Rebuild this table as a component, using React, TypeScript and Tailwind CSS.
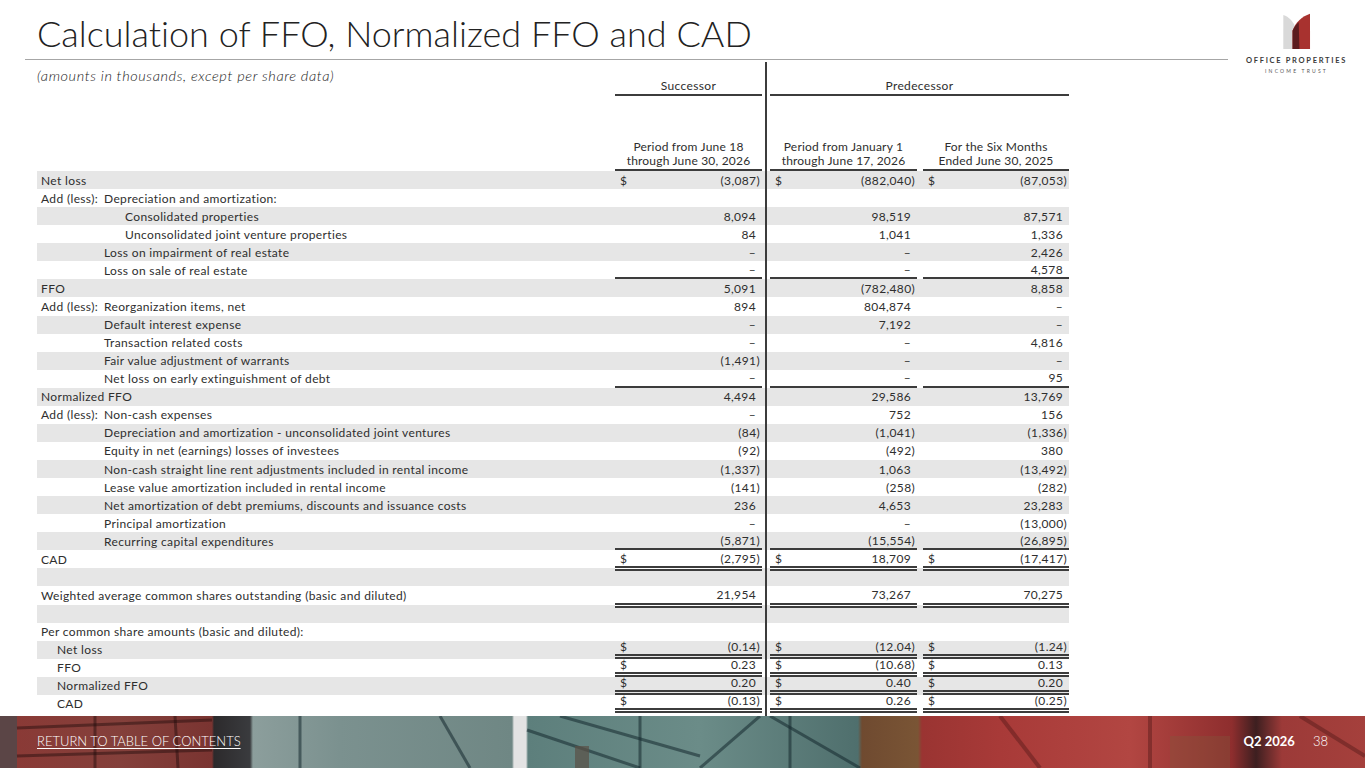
import React from "react";

type Line = "single" | "double" | "doubleIn";

type Row = {
  label: string;
  prefix?: string;
  indent: "l0" | "l1" | "l2" | "ps";
  v?: [string, string, string];
  dollar?: boolean;
  line?: Line;
};

const D = "–";

const rows: Row[] = [
  { label: "Net loss", indent: "l0", v: ["(3,087)", "(882,040)", "(87,053)"], dollar: true },
  { label: "Depreciation and amortization:", prefix: "Add (less):", indent: "l0" },
  { label: "Consolidated properties", indent: "l2", v: ["8,094", "98,519", "87,571"] },
  { label: "Unconsolidated joint venture properties", indent: "l2", v: ["84", "1,041", "1,336"] },
  { label: "Loss on impairment of real estate", indent: "l1", v: [D, D, "2,426"] },
  { label: "Loss on sale of real estate", indent: "l1", v: [D, D, "4,578"], line: "single" },
  { label: "FFO", indent: "l0", v: ["5,091", "(782,480)", "8,858"] },
  { label: "Reorganization items, net", prefix: "Add (less):", indent: "l0", v: ["894", "804,874", D] },
  { label: "Default interest expense", indent: "l1", v: [D, "7,192", D] },
  { label: "Transaction related costs", indent: "l1", v: [D, D, "4,816"] },
  { label: "Fair value adjustment of warrants", indent: "l1", v: ["(1,491)", D, D] },
  { label: "Net loss on early extinguishment of debt", indent: "l1", v: [D, D, "95"], line: "single" },
  { label: "Normalized FFO", indent: "l0", v: ["4,494", "29,586", "13,769"] },
  { label: "Non-cash expenses", prefix: "Add (less):", indent: "l0", v: [D, "752", "156"] },
  { label: "Depreciation and amortization - unconsolidated joint ventures", indent: "l1", v: ["(84)", "(1,041)", "(1,336)"] },
  { label: "Equity in net (earnings) losses of investees", indent: "l1", v: ["(92)", "(492)", "380"] },
  { label: "Non-cash straight line rent adjustments included in rental income", indent: "l1", v: ["(1,337)", "1,063", "(13,492)"] },
  { label: "Lease value amortization included in rental income", indent: "l1", v: ["(141)", "(258)", "(282)"] },
  { label: "Net amortization of debt premiums, discounts and issuance costs", indent: "l1", v: ["236", "4,653", "23,283"] },
  { label: "Principal amortization", indent: "l1", v: [D, D, "(13,000)"] },
  { label: "Recurring capital expenditures", indent: "l1", v: ["(5,871)", "(15,554)", "(26,895)"], line: "single" },
  { label: "CAD", indent: "l0", v: ["(2,795)", "18,709", "(17,417)"], dollar: true, line: "double" },
  { label: "", indent: "l0" },
  { label: "Weighted average common shares outstanding (basic and diluted)", indent: "l0", v: ["21,954", "73,267", "70,275"], line: "double" },
  { label: "", indent: "l0" },
  { label: "Per common share amounts (basic and diluted):", indent: "l0" },
  { label: "Net loss", indent: "ps", v: ["(0.14)", "(12.04)", "(1.24)"], dollar: true, line: "doubleIn" },
  { label: "FFO", indent: "ps", v: ["0.23", "(10.68)", "0.13"], dollar: true, line: "doubleIn" },
  { label: "Normalized FFO", indent: "ps", v: ["0.20", "0.40", "0.20"], dollar: true, line: "doubleIn" },
  { label: "CAD", indent: "ps", v: ["(0.13)", "0.26", "(0.25)"], dollar: true, line: "doubleIn" },
];

const indentCls: Record<string, string> = {
  l0: "pl-[4px]",
  l1: "pl-[67px]",
  l2: "pl-[88px]",
  ps: "pl-[20px]",
};

const lineCls: Record<string, string> = {
  none: "",
  single: "border-b-2 border-[#3c3c3c]",
  double: "relative border-b-2 border-[#3c3c3c] shadow-[0_1px_0_0_#ffffff,0_3px_0_0_#3c3c3c]",
  doubleIn: "border-b-[5px] border-double border-[#3c3c3c] pb-[1px]",
};

function Val({ v, dollar, line, w }: { v?: string; dollar?: boolean; line?: Line; w: string }) {
  const paren = v ? v.endsWith(")") : false;
  return (
    <div className={`${w} flex items-center justify-between pl-[5px] ${paren ? "pr-[2px]" : "pr-[6px]"} ${lineCls[line ?? "none"]}`}>
      <span>{dollar ? "$" : ""}</span>
      <span>{v ?? ""}</span>
    </div>
  );
}

function Sep({ top = false }: { top?: boolean }) {
  return (
    <div className="w-[8px] flex justify-center">
      <div className={`w-[2px] bg-[#3c3c3c] ${top ? "mt-[2px]" : ""}`} />
    </div>
  );
}

function Logo() {
  return (
    <div className="flex flex-col items-center pt-[13px]">
      <svg width="28" height="36" viewBox="0 0 80 105">
        <path d="M0,6 C16,10 30,26 37,46 L37,105 L0,105 Z" fill="#d9d9d9" />
        <path d="M27,105 L27,52 C36,26 55,10 78,2 L78,105 Z" fill="#a8322f" />
        <path d="M27,105 L27,52 C31,42 37,34 45,27 L47,105 Z" fill="#5b1c1f" />
      </svg>
      <div className="mt-[7px] text-[7.5px] leading-[10px] font-bold tracking-[1.7px] text-[#3a3a3a]">
        OFFICE PROPERTIES
      </div>
      <div className="mt-[1px] text-[5px] leading-[8px] tracking-[2.2px] text-[#555555]">
        INCOME TRUST
      </div>
    </div>
  );
}

function Footer() {
  return (
    <div className="relative h-[52px] w-full overflow-hidden bg-[linear-gradient(90deg,#5b4546_0px,#5b4546_17px,#8a3a36_17px,#84403b_120px,#7a3431_212px,#2c2a2c_214px,#3a3b3e_250px,#8c9e9c_253px,#7b918f_340px,#6f8784_512px,#e3e3e3_514px,#e3e3e3_526px,#5d7f7c_528px,#6b8c88_700px,#4f6f6d_858px,#6f4a30_862px,#7a5535_918px,#9a3432_922px,#a83a38_1000px,#b24642_1130px,#8e2e2e_1232px,#3d1f20_1256px,#9c3a38_1282px,#a5403c_1365px)]">
      <svg className="absolute inset-0" width="1365" height="52" viewBox="0 0 1365 52">
        <g stroke="rgba(30,10,10,0.45)" strokeWidth="3" fill="none">
          <line x1="95" y1="0" x2="95" y2="52" />
          <line x1="175" y1="0" x2="178" y2="52" />
          <line x1="17" y1="12" x2="212" y2="4" />
          <line x1="17" y1="40" x2="212" y2="34" />
        </g>
        <g stroke="rgba(20,40,45,0.55)" strokeWidth="3" fill="none">
          <line x1="300" y1="0" x2="300" y2="52" />
          <line x1="440" y1="0" x2="470" y2="52" />
          <line x1="527" y1="14" x2="640" y2="52" />
          <line x1="560" y1="0" x2="700" y2="40" />
          <line x1="760" y1="0" x2="700" y2="52" />
          <line x1="770" y1="0" x2="860" y2="52" />
          <line x1="640" y1="0" x2="640" y2="52" />
          <line x1="790" y1="0" x2="790" y2="52" />
        </g>
        <g stroke="rgba(60,15,15,0.35)" strokeWidth="4" fill="none">
          <line x1="1000" y1="0" x2="1040" y2="52" />
          <line x1="1150" y1="0" x2="1150" y2="52" />
          <line x1="1300" y1="0" x2="1365" y2="40" />
        </g>
        <rect x="575" y="30" width="14" height="22" fill="rgba(90,80,70,0.7)" />
        <rect x="1170" y="20" width="60" height="32" fill="rgba(130,90,60,0.35)" />
      </svg>
      <div className="relative flex h-full items-center justify-between pl-[37px] pr-[37px] text-white">
        <span className="text-[13px] font-light underline underline-offset-2">RETURN TO TABLE OF CONTENTS</span>
        <div className="flex items-center gap-[18px] text-[13px]">
          <span className="font-bold">Q2 2026</span>
          <span className="font-light">38</span>
        </div>
      </div>
    </div>
  );
}

export default function App() {
  return (
    <div className="w-[1365px] h-[768px] overflow-hidden bg-white flex flex-col font-['Lato',sans-serif] [font-variant-ligatures:none] text-[#2e2e2e]">
      <div className="flex h-[716px]">
        <div className="w-[1228px] pl-[25px] flex flex-col">
          <div className="h-[60px] border-b border-[#a6a6a6] flex items-end pl-[12px] pb-[8px]">
            <h1 className="text-[36px] leading-[36px] font-light text-[#222222]">
              Calculation of FFO, Normalized FFO and CAD
            </h1>
          </div>
          <div className="pl-[12px] w-[1044px] flex-1 flex flex-col text-[12px] leading-[13px] tracking-[0.35px]">
            <div className="flex h-[36px]">
              <div className="flex-1 pt-[7px] italic font-light text-[14.5px] leading-[18px] text-[#1a1a1a] tracking-[0.6px]">
                (amounts in thousands, except per share data)
              </div>
              <div className="w-[147px] flex items-end justify-center border-b-2 border-[#3c3c3c] leading-[16px]">Successor</div>
              <Sep top />
              <div className="w-[299px] flex items-end justify-center border-b-2 border-[#3c3c3c] leading-[16px]">Predecessor</div>
            </div>
            <div className="flex h-[75px] leading-[14px] text-[12px] tracking-[0.2px]">
              <div className="flex-1" />
              <div className="w-[147px] flex items-end justify-center text-center border-b-2 border-[#3c3c3c] pb-[1px]">
                Period from June 18<br />through June 30, 2026
              </div>
              <Sep />
              <div className="w-[147px] flex items-end justify-center text-center border-b-2 border-[#3c3c3c] pb-[1px]">
                Period from January 1<br />through June 17, 2026
              </div>
              <div className="w-[6px]" />
              <div className="w-[146px] flex items-end justify-center text-center border-b-2 border-[#3c3c3c] pb-[1px]">
                For the Six Months<br />Ended June 30, 2025
              </div>
            </div>
            {rows.map((r, i) => (
              <div key={i} className={`flex h-[18.07px] shrink-0 ${i % 2 === 0 ? "bg-[#e6e6e6]" : ""}`}>
                <div className={`flex-1 flex items-center whitespace-nowrap ${indentCls[r.indent]}`}>
                  {r.prefix ? <span className="w-[63px] shrink-0">{r.prefix}</span> : null}
                  <span>{r.label}</span>
                </div>
                <Val w="w-[147px]" v={r.v?.[0]} dollar={r.dollar} line={r.line} />
                <Sep />
                <Val w="w-[147px]" v={r.v?.[1]} dollar={r.dollar} line={r.line} />
                <div className="w-[6px]" />
                <Val w="w-[146px]" v={r.v?.[2]} dollar={r.dollar} line={r.line} />
              </div>
            ))}
            <div className="flex flex-1">
              <div className="flex-1" />
              <div className="w-[147px]" />
              <Sep />
              <div className="w-[299px]" />
            </div>
          </div>
        </div>
        <div className="flex-1">
          <Logo />
        </div>
      </div>
      <Footer />
    </div>
  );
}
